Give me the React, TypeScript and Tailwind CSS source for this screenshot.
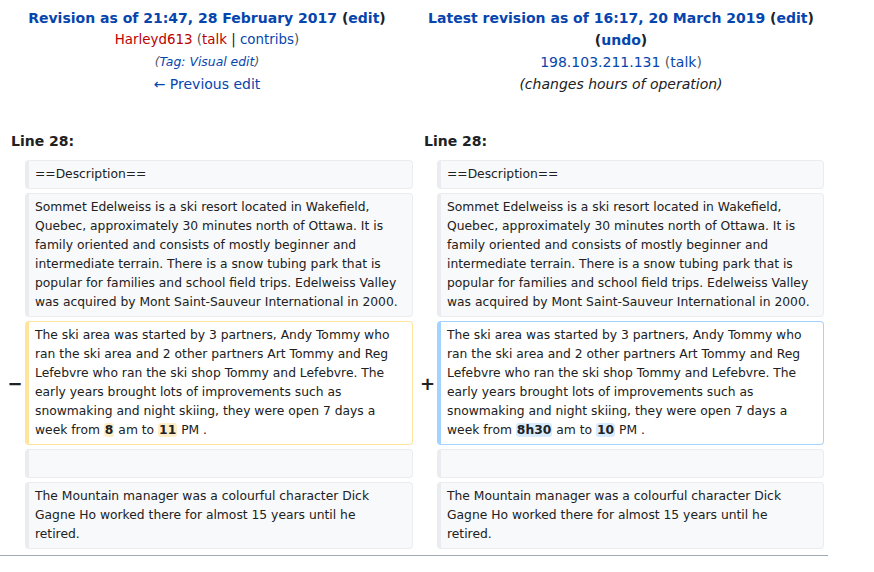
const font = { fontFamily: '"DejaVu Sans", sans-serif' };

const ctx = [
  "Sommet Edelweiss is a ski resort located in Wakefield, Quebec, approximately 30 minutes north of Ottawa. It is family oriented and consists of mostly beginner and intermediate terrain. There is a snow tubing park that is popular for families and school field trips. Edelweiss Valley was acquired by Mont Saint-Sauveur International in 2000.",
];

const Box = ({ children, kind }: { children?: React.ReactNode; kind?: "del" | "add" }) => {
  const border =
    kind === "del"
      ? "border-[#ffe49c]"
      : kind === "add"
        ? "border-[#a3d3ff]"
        : "border-[#eaecf0]";
  const bg = kind ? "bg-white" : "bg-[#f8f9fa]";
  return (
    <div
      className={`flex-1 min-h-[29px] border border-l-4 rounded-[4px] ${border} ${bg} pl-[6px] pr-[10px] py-[4px] text-[12.32px] leading-[19px] text-[#202122]`}
    >
      {children}
    </div>
  );
};

const Marker = ({ sign, w }: { sign?: string; w: string }) => (
  <div className={`${w} shrink-0 flex items-center justify-center pl-[5px] text-[18px] font-bold text-[#202122]`}>
    {sign}
  </div>
);

const Row = (props: {
  left?: React.ReactNode;
  right?: React.ReactNode;
  kind?: boolean;
}) => (
  <div className="flex">
    <Marker w="w-[25px]" sign={props.kind ? "−" : undefined} />
    <div className="w-[388px] flex">
      <Box kind={props.kind ? "del" : undefined}>{props.left}</Box>
    </div>
    <Marker w="w-[24px]" sign={props.kind ? "+" : undefined} />
    <div className="w-[387px] flex">
      <Box kind={props.kind ? "add" : undefined}>{props.right}</Box>
    </div>
  </div>
);

const changed = (a: string, b: string, bg: string) => (
  <>
    The ski area was started by 3 partners, Andy Tommy who ran the ski area and 2 other partners Art
    Tommy and Reg Lefebvre who ran the ski shop Tommy and Lefebvre. The early years brought lots of
    improvements such as snowmaking and night skiing, they were open 7 days a week from{" "}
    <span className={`font-bold rounded-[3px] px-[1px] ${bg}`}>{a}</span> am to{" "}
    <span className={`font-bold rounded-[3px] px-[1px] ${bg}`}>{b}</span> PM .
  </>
);

export default function App() {
  const mountain =
    "The Mountain manager was a colourful character Dick Gagne Ho worked there for almost 15 years until he retired.";
  return (
    <div className="w-[874px] h-[572px] bg-white text-[#202122]" style={font}>
      <div className="w-[828px]">
        <div className="flex pt-[7px] text-[14px] leading-[22px]">
          <div className="w-[414px] flex flex-col items-center text-center">
            <div className="font-bold">
              <span className="text-[#0645ad]">Revision as of 21:47, 28 February 2017</span> (
              <span className="text-[#0645ad]">edit</span>)
            </div>
            <div className="text-[#54595d] text-[13.4px]">
              <span className="text-[#ba0000]">Harleyd613</span> (
              <span className="text-[#ba0000]">talk</span> <span className="text-[#202122]">|</span>{" "}
              <span className="text-[#0645ad]">contribs</span>)
            </div>
            <div className="italic text-[12.4px] text-[#54595d]">
              (<span className="text-[#0645ad]">Tag: Visual edit</span>)
            </div>
            <div className="text-[#0645ad]">← Previous edit</div>
          </div>
          <div className="w-[414px] flex flex-col items-center text-center">
            <div className="font-bold">
              <span className="text-[#0645ad]">Latest revision as of 16:17, 20 March 2019</span> (
              <span className="text-[#0645ad]">edit</span>)
            </div>
            <div className="font-bold">
              (<span className="text-[#0645ad]">undo</span>)
            </div>
            <div className="text-[#54595d]">
              <span className="text-[#0645ad]">198.103.211.131</span> (
              <span className="text-[#0645ad]">talk</span>)
            </div>
            <div className="italic">(changes hours of operation)</div>
          </div>
        </div>

        <div className="flex mt-[36px] text-[14px] leading-[20px] font-bold">
          <div className="w-[413px] pl-[11px]">Line 28:</div>
          <div className="pl-[11px]">Line 28:</div>
        </div>

        <div className="flex flex-col gap-[4px] mt-[9px]">
          <Row left="==Description==" right="==Description==" />
          <Row left={ctx[0]} right={ctx[0]} />
          <Row
            kind
            left={changed("8", "11", "bg-[#feeec8]")}
            right={changed("8h30", "10", "bg-[#d8ecff]")}
          />
          <Row />
          <Row left={mountain} right={mountain} />
        </div>
        <div className="mt-[6px] border-t border-[#a2a9b1]" />
      </div>
    </div>
  );
}
